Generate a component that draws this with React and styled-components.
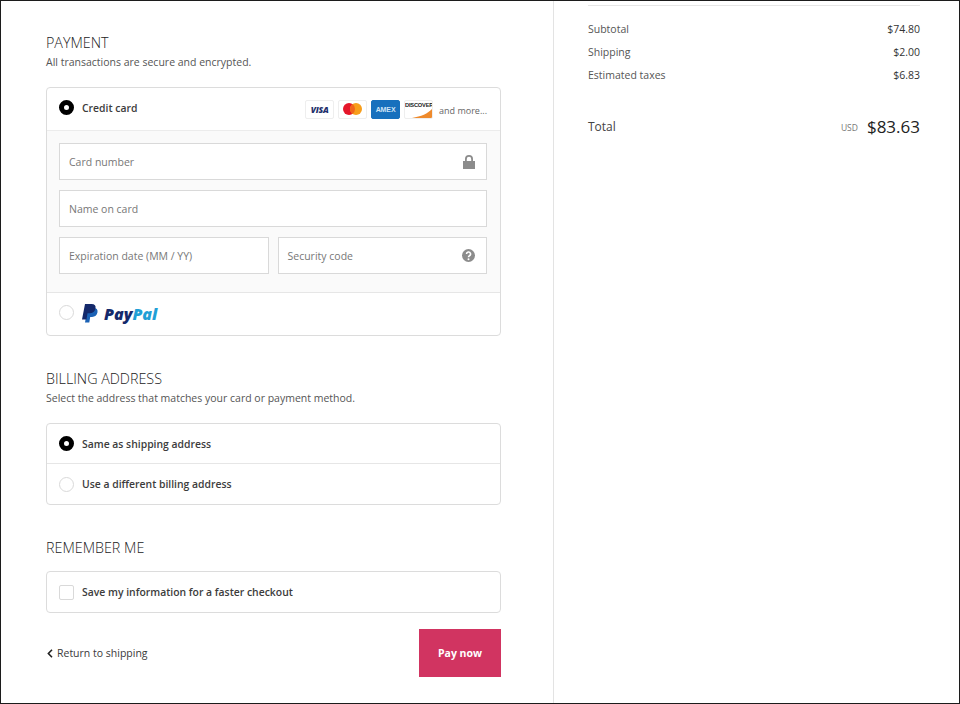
import React from "react";
import styled, { createGlobalStyle } from "styled-components";

const Global = createGlobalStyle`
  html, body { margin: 0; padding: 0; background: #fff; }
  * { box-sizing: border-box; }
  body { font-family: "Open Sans", "Noto Sans", sans-serif; color: #333; }
`;

const Frame = styled.div`
  width: 960px; height: 704px; overflow: hidden; display: flex;
  border: 1px solid #1c1c1c; background: #fff;
`;
const Main = styled.main`
  width: 553px; height: 100%; flex: none; padding: 32px 52px 0 45px;
  border-right: 1px solid #e3e3e3;
`;
const Side = styled.aside`
  flex: 1; padding: 4px 39px 0 34px;
`;
const Section = styled.section`
  margin-bottom: ${p => p.$mb}px;
`;
const Heading = styled.h2`
  margin: 0 0 ${p => p.$gap ?? 2}px; font-size: 14.3px; line-height: 19px; font-weight: 300; color: #222;
  text-transform: uppercase;
`;
const Sub = styled.p`
  margin: 0 0 16px; font-size: 10.5px; line-height: 17px; color: #555;
`;
const Card = styled.div`
  border: 1px solid #dcdcdc; border-radius: 4px; overflow: hidden; background: #fff;
`;
const Row = styled.div`
  height: ${p => p.$h}px; display: flex; align-items: center;
  padding: 0 13px ${p => p.$pb ?? 0}px 12px;
  gap: 8px;
  & + & { border-top: 1px solid #e6e6e6; }
`;
const Radio = styled.span`
  width: 15px; height: 15px; flex: none; border-radius: 50%;
  border: ${p => (p.$on ? "5.5px solid #000" : "1px solid #d9d9d9")};
  background: #fff;
`;
const Box = styled.span`
  width: 15px; height: 15px; flex: none; border-radius: 2px;
  border: 1px solid #d9d9d9; background: #fff;
`;
const Label = styled.span`
  font-size: 10.4px; font-weight: 600; color: #3c3c3c; white-space: nowrap;
`;
const Logos = styled.div`
  margin: 3px 0 0 auto; display: flex; align-items: center; gap: 4px;
`;
const PayCard = styled.span`
  width: 29px; height: 19px; border-radius: 2px; display: flex; align-items: center; justify-content: center;
  overflow: hidden; position: relative; white-space: nowrap;
  background: ${p => p.$bg || "#fff"};
  border: 1px solid ${p => p.$line || "#eeeeee"};
`;
const VisaText = styled.span`
  font: italic 800 8.5px "Open Sans", sans-serif; color: #23306b; letter-spacing: -.2px;
`;
const AmexText = styled.span`
  font: 700 7px "Liberation Sans", sans-serif; color: #cfe4f6; letter-spacing: -.1px;
`;
const DiscoverText = styled.span`
  font: 700 5.7px "Liberation Sans", sans-serif; color: #222; letter-spacing: -.2px;
  position: absolute; top: 1px; left: 0;
`;
const SwooshSvg = styled.svg`
  position: absolute; left: 0; top: 0;
`;
const More = styled.span`
  font-size: 9px; color: #666; margin: 3px 0 0 2px;
`;
const Fields = styled.div`
  background: #fafafa; border-top: 1px solid #ececec; padding: 12px 13px 18px 12px;
  display: grid; grid-template-columns: 1fr 1fr; gap: 10px 9px;
`;
const Field = styled.div`
  grid-column: ${p => (p.$wide ? "1 / -1" : "auto")};
  height: 37px; background: #fff; border: 1px solid #d9d9d9; display: flex;
  align-items: center; justify-content: space-between; padding: 0 11px 0 9px;
  font-size: 10.5px; color: #777;
`;
const PayPalRow = styled(Row)`
  border-top: 1px solid #e6e6e6;
`;
const MarkSvg = styled.svg`
  margin-top: 2px;
`;
const PayPalWord = styled.span`
  font: italic 800 16px "Open Sans", sans-serif; color: #14296b; margin: 2px 0 0 -2px;
  & > b { color: #1f9fd6; font-weight: 800; }
`;
const Actions = styled.div`
  display: flex; align-items: center; justify-content: space-between;
`;
const Back = styled.a`
  display: flex; align-items: center; gap: 4px; font-size: 10.5px; color: #3a3a3a; margin-left: 1px;
`;
const Pay = styled.button`
  width: 82px; height: 48px; background: #d13461; border: 0; color: #fff;
  font: 700 10.5px "Open Sans", sans-serif;
`;
const Rule = styled.hr`
  margin: 0 0 11px; border: 0; border-top: 1px solid #e6e6e6;
`;
const Line = styled.div`
  display: flex; justify-content: space-between; align-items: center;
  height: 23px; font-size: 10.5px; color: #555;
  & > b { font-weight: 500; color: #333; }
`;
const TotalRow = styled.div`
  display: flex; justify-content: space-between; align-items: center;
  margin-top: 29px; color: #444; font-size: 12px;
`;
const TotalValue = styled.div`
  display: flex; align-items: center; gap: 9px;
`;
const Cur = styled.span`
  font-size: 8.5px; color: #777; margin-top: 2px;
`;
const Amount = styled.span`
  font-size: 17px; color: #222;
`;

const Lock = () => (
  <svg width="12" height="14" viewBox="0 0 12 14">
    <path fill="#8c8c8c" d="M0 6h12v8H0z" />
    <path fill="none" stroke="#8c8c8c" strokeWidth="1.8" d="M2.9 6V4a3.1 3.1 0 0 1 6.2 0v2" />
  </svg>
);
const Help = () => (
  <svg width="13" height="13" viewBox="0 0 13 13">
    <circle cx="6.500" cy="6.500" r="6.500" fill="#8c8c8c" />
    <path fill="none" stroke="#fff" strokeWidth="1.600" d="M4.500 5a2 2 0 1 1 3 1.700c-.7.4-1 .8-1 1.500" />
    <circle cx="6.500" cy="10.200" r="1" fill="#fff" />
  </svg>
);
const Chevron = () => (
  <svg width="6" height="9" viewBox="0 0 6 9">
    <path fill="none" stroke="#222" strokeWidth="1.600" d="M5 .8 1.400 4.500 5 8.200" />
  </svg>
);
const Master = () => (
  <svg width="19" height="12" viewBox="0 0 19 12">
    <circle cx="6" cy="6" r="6" fill="#e5162a" />
    <circle cx="13" cy="6" r="6" fill="#f79e1b" />
    <path fill="#f0641c" d="M9.500 1.100a6 6 0 0 1 0 9.800 6 6 0 0 1 0-9.800z" />
  </svg>
);
const Swoosh = () => (
  <SwooshSvg width="27" height="17" viewBox="0 0 27 17">
    <path fill="#ee8a2c" d="M27 8V17H7C16 15.500 23 12.500 27 8z" />
  </SwooshSvg>
);
const PayPalMark = () => (
  <MarkSvg width="16" height="19" viewBox="0 0 16 19">
    <path fill="#1b62b5" d="M5.500 4h6c3 0 4.500 1.500 4 4.300-.5 3-2.600 4.600-5.400 4.600H8.200L7.300 18.600H3z" />
    <path fill="#14296b" d="M3 0h6.500c3.200 0 4.600 1.700 4 4.500-.6 3.100-2.700 4.800-5.800 4.800H5.500L4.500 15.500H0z" />
  </MarkSvg>
);

export default function App() {
  return (
    <Frame>
      <Global />
      <Main>
        <Section $mb={33}>
          <Heading>Payment</Heading>
          <Sub>All transactions are secure and encrypted.</Sub>
          <Card>
            <Row $h={42} $pb={3}>
              <Radio $on />
              <Label>Credit card</Label>
              <Logos>
                <PayCard><VisaText>VISA</VisaText></PayCard>
                <PayCard><Master /></PayCard>
                <PayCard $bg="#1770bd" $line="#1770bd"><AmexText>AMEX</AmexText></PayCard>
                <PayCard><DiscoverText>DISCOVER</DiscoverText><Swoosh /></PayCard>
                <More>and more...</More>
              </Logos>
            </Row>
            <Fields>
              <Field $wide>Card number <Lock /></Field>
              <Field $wide>Name on card</Field>
              <Field>Expiration date (MM / YY)</Field>
              <Field>Security code <Help /></Field>
            </Fields>
            <PayPalRow $h={43} $pb={3}>
              <Radio />
              <PayPalMark />
              <PayPalWord>Pay<b>Pal</b></PayPalWord>
            </PayPalRow>
          </Card>
        </Section>
        <Section $mb={33}>
          <Heading>Billing address</Heading>
          <Sub>Select the address that matches your card or payment method.</Sub>
          <Card>
            <Row $h={39}><Radio $on /><Label>Same as shipping address</Label></Row>
            <Row $h={41}><Radio /><Label>Use a different billing address</Label></Row>
          </Card>
        </Section>
        <Section $mb={16}>
          <Heading $gap={14}>Remember me</Heading>
          <Card>
            <Row $h={40}><Box /><Label>Save my information for a faster checkout</Label></Row>
          </Card>
        </Section>
        <Actions>
          <Back><Chevron />Return to shipping</Back>
          <Pay>Pay now</Pay>
        </Actions>
      </Main>
      <Side>
        <Rule />
        <Line><span>Subtotal</span><b>$74.80</b></Line>
        <Line><span>Shipping</span><b>$2.00</b></Line>
        <Line><span>Estimated taxes</span><b>$6.83</b></Line>
        <TotalRow>
          <span>Total</span>
          <TotalValue><Cur>USD</Cur><Amount>$83.63</Amount></TotalValue>
        </TotalRow>
      </Side>
    </Frame>
  );
}
